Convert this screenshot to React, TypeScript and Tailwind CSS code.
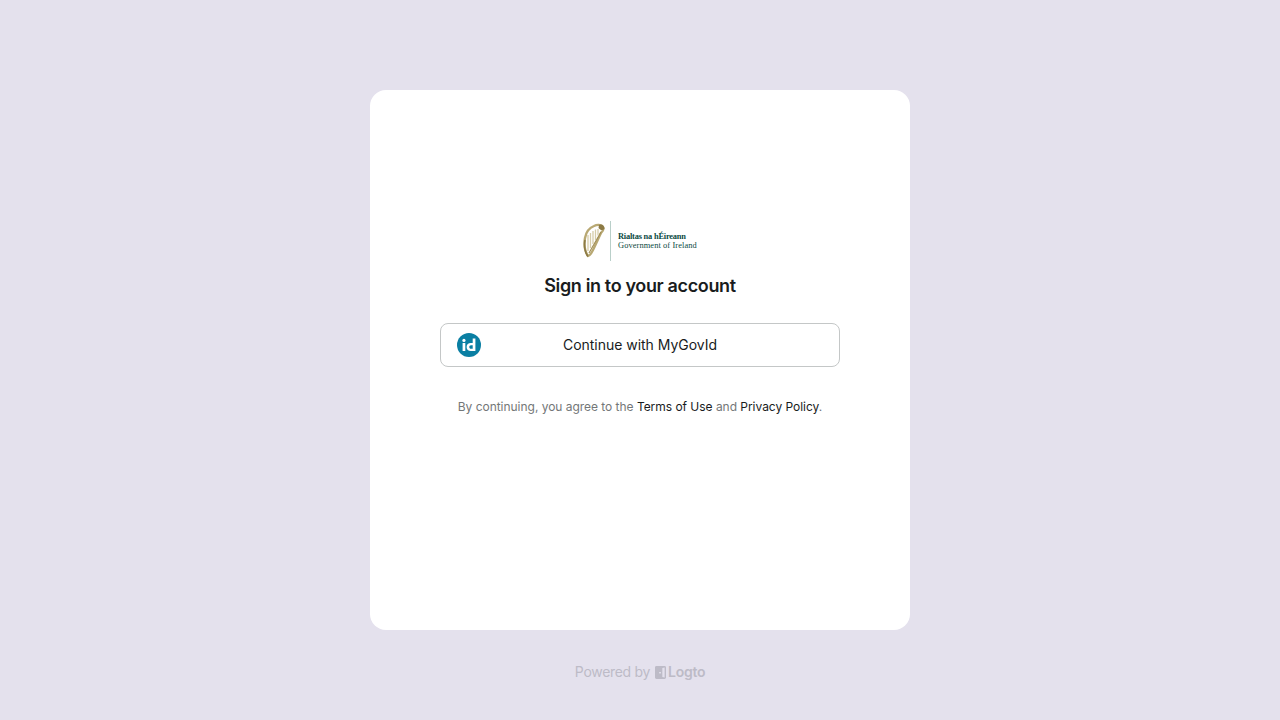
export default function App() {
  return (
    <div className="min-h-screen h-[720px] bg-[#e4e1ed] flex flex-col items-center pt-[90px] font-['Inter',sans-serif] overflow-hidden">
      <div className="w-[540px] h-[540px] bg-white rounded-2xl flex flex-col items-center pt-[131px] px-[70px]">
        <div className="h-10 w-[116px] flex items-center">
          <svg width="22" height="36" viewBox="0 0 22 36" fill="none" className="shrink-0 ml-px">
            <path d="M5 33 C1.5 28 1 21 2 15 C3 9 6 5 11 3 C14 1.5 18 1.5 20 4 C21.5 6.5 19.5 8.5 18 10 C15.5 15 13 21 10 27 C8.5 30 7 33 5 33 Z" stroke="#b8a873" strokeWidth="2.4" />
            <path d="M6 30 L18 9" stroke="#a18e55" strokeWidth="1.2" />
            <path d="M5 12 V28 M7.5 10 V25 M10 8 V21 M12.5 6.5 V17 M15 6 V12.5" stroke="#d6cca8" strokeWidth="1.3" />
            <path d="M16 2 C19 0.5 21.5 2.5 21.5 6 C19.5 8 17 7 15.5 5 Z" fill="#8c7a45" />
            <path d="M2 17 C0.8 23 2 30 5 33.5" stroke="#8c7a45" strokeWidth="1.6" />
          </svg>
          <div className="w-px h-10 bg-[#b9cfc9] ml-[5px] shrink-0" />
          <div className="ml-[7px] flex flex-col font-['Liberation_Serif',serif] text-[8.4px] leading-[8.5px] whitespace-nowrap mt-[1px]">
            <span className="font-bold text-[#0b4a42] tracking-[-0.2px]">Rialtas na hÉireann</span>
            <span className="text-[#0b4a42] tracking-[0.1px]">Government of Ireland</span>
          </div>
        </div>
        <h1 className="mt-[13px] text-lg leading-6 font-semibold text-[#191c1d] tracking-[-0.36px]">Sign in to your account</h1>
        <button className="mt-[25px] w-[400px] h-11 relative flex items-center justify-center rounded-lg border border-[#c4c7c7] bg-white text-sm font-normal text-[#191c1d] tracking-[-0.03px]">
          <svg width="24" height="24" viewBox="0 0 24 24" className="absolute left-4 top-[9px]">
            <circle cx="12" cy="12" r="12" fill="#0a7fa3" />
            <rect x="5.6" y="10" width="2.7" height="8" fill="#fff" />
            <circle cx="6.95" cy="7.4" r="1.6" fill="#fff" />
            <path fillRule="evenodd" d="M15.7 5.6 H18.4 V18 H13.8 C11.3 18 9.6 16.4 9.6 14 C9.6 11.6 11.3 10 13.8 10 H15.7 Z M15.7 12.2 H14 C12.9 12.2 12.3 12.9 12.3 14 C12.3 15.1 12.9 15.8 14 15.8 H15.7 Z" fill="#fff" />
          </svg>
          Continue with MyGovId
        </button>
        <p className="mt-[32px] text-xs leading-4 text-[#747778] tracking-[-0.03px]">
          By continuing, you agree to the <span className="text-[#191c1d]">Terms of Use</span> and <span className="text-[#191c1d]">Privacy Policy</span>.
        </p>
      </div>
      <div className="mt-[32px] h-5 flex items-center text-sm text-[#bdbbc7] whitespace-nowrap">
        <span className="tracking-[-0.3px]">Powered by</span>
        <svg width="11" height="13" viewBox="0 0 12 14" className="ml-[5px]">
          <path fillRule="evenodd" d="M0 1.5 C0 .7 .7 0 1.5 0 H10.5 C11.3 0 12 .7 12 1.5 V12.5 C12 13.3 11.3 14 10.5 14 H1.5 C.7 14 0 13.3 0 12.5 Z M8 2 L8 12 L10.5 12.5 V1.5 Z M5.5 6.5 A.8 .8 0 1 0 5.5 8 A.8 .8 0 1 0 5.5 6.5 Z" fill="#bdbbc7" />
        </svg>
        <span className="ml-[2px] font-semibold text-[14px] tracking-[-0.3px]">Logto</span>
      </div>
    </div>
  );
}
